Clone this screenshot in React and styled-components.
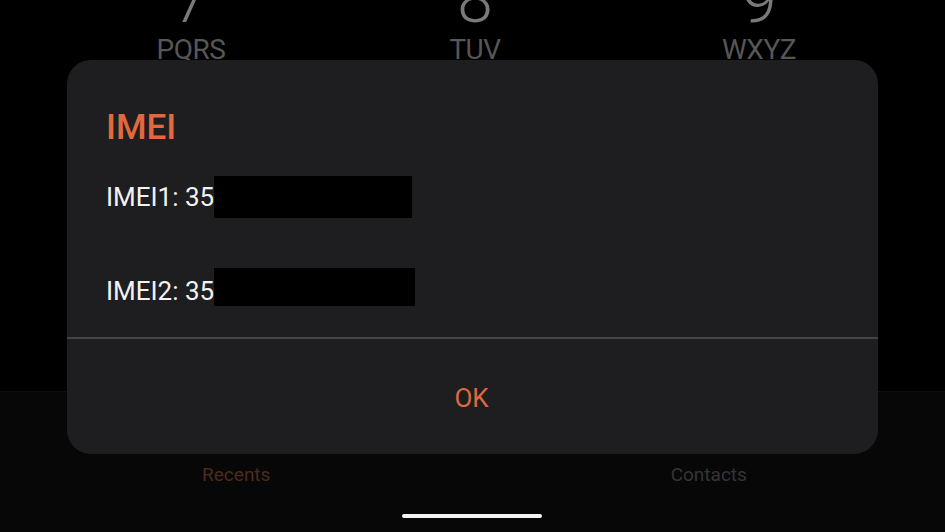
import React from "react";
import styled, { createGlobalStyle } from "styled-components";

const GlobalStyle = createGlobalStyle`
  html, body {
    margin: 0;
    padding: 0;
    background: #000;
  }
  body {
    font-family: Roboto, "Noto Sans", "Liberation Sans", sans-serif;
    -webkit-font-smoothing: antialiased;
  }
`;

const Screen = styled.div`
  position: relative;
  width: 945px;
  height: 532px;
  overflow: hidden;
  background: #000;
  display: flex;
  flex-direction: column;
`;

const Keypad = styled.div`
  flex: 1;
  display: grid;
  grid-template-columns: repeat(3, 284px);
  padding-left: 49px;
  align-content: start;
`;

const Key = styled.div`
  display: flex;
  flex-direction: column;
  align-items: center;
`;

const Digit = styled.span`
  font-size: 64px;
  font-weight: 300;
  line-height: 64px;
  margin-top: -31px;
  color: #7a7a7a;
`;

const Letters = styled.span`
  margin-top: 1px;
  font-size: 28px;
  line-height: 32px;
  letter-spacing: -0.5px;
  color: #565656;
`;

const Nav = styled.div`
  height: 141px;
  background: #070707;
  border-top: 1px solid #101010;
  box-sizing: border-box;
  display: flex;
  flex-direction: column;
  align-items: center;
  padding-top: 71px;
`;

const Tabs = styled.div`
  width: 100%;
  display: grid;
  grid-template-columns: 1fr 1fr;
`;

const Tab = styled.span`
  text-align: center;
  font-size: 19px;
  line-height: 24px;
  color: ${(p) => (p.$active ? "#4d2a1f" : "#353535")};
`;

const HomeBar = styled.div`
  width: 140px;
  height: 4px;
  border-radius: 2px;
  background: #f4f4f4;
  margin: 27px 2px 0 0;
`;

const Dialog = styled.div`
  position: absolute;
  left: 67px;
  top: 60px;
  width: 811px;
  height: 394px;
  border-radius: 24px;
  background: #1e1e20;
  display: flex;
  flex-direction: column;
  overflow: hidden;
`;

const Content = styled.div`
  padding: 48px 39px 22px;
`;

const Title = styled.h2`
  margin: 0 0 26px;
  font-size: 35px;
  line-height: 40px;
  font-weight: 500;
  color: #e2693d;
`;

const Line = styled.div`
  display: flex;
  height: 47px;
  font-size: 26px;
  line-height: 47px;
  color: #f2f2f2;
  white-space: pre;
`;

const Redacted = styled.span`
  display: block;
  width: ${(p) => p.$w}px;
  height: ${(p) => p.$h}px;
  margin-top: ${(p) => p.$top}px;
  background: #000;
`;

const Divider = styled.div`
  height: 2px;
  background: #444446;
`;

const Action = styled.button`
  flex: 1;
  border: none;
  background: transparent;
  padding: 2px 2px 0 0;
  font-family: inherit;
  font-size: 26px;
  font-weight: 400;
  color: #da6a40;
  cursor: pointer;
`;

const keys = [
  ["7", "PQRS"],
  ["8", "TUV"],
  ["9", "WXYZ"],
];

export default function App() {
  return (
    <>
      <GlobalStyle />
      <Screen>
        <Keypad>
          {keys.map(([d, l]) => (
            <Key key={d}>
              <Digit>{d}</Digit>
              <Letters>{l}</Letters>
            </Key>
          ))}
        </Keypad>
        <Nav>
          <Tabs>
            <Tab $active>Recents</Tab>
            <Tab>Contacts</Tab>
          </Tabs>
          <HomeBar />
        </Nav>

        <Dialog>
          <Content>
            <Title>IMEI</Title>
            <Line>
              IMEI1: 35
              <Redacted $w={198} $h={42} $top={2} />
            </Line>
            <Line />
            <Line>
              IMEI2: 35
              <Redacted $w={201} $h={38} $top={0} />
            </Line>
          </Content>
          <Divider />
          <Action>OK</Action>
        </Dialog>
      </Screen>
    </>
  );
}
